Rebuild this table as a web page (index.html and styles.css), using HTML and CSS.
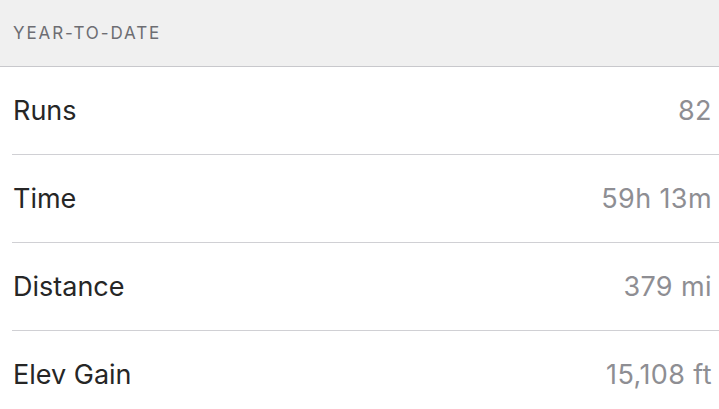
FILE: index.html
```html
<!DOCTYPE html>
<html>
<head>
<meta charset="utf-8">
<link rel="stylesheet" href="styles.css">
</head>
<body>
<div class="header">YEAR-TO-DATE</div>
<ul class="list">
  <li class="row"><span class="label">Runs</span><span class="value">82</span></li>
  <li class="row"><span class="label">Time</span><span class="value">59h 13m</span></li>
  <li class="row"><span class="label">Distance</span><span class="value">379 mi</span></li>
  <li class="row"><span class="label">Elev Gain</span><span class="value">15,108 ft</span></li>
</ul>
</body>
</html>
```
FILE: styles.css
```css
html, body {
  margin: 0;
  padding: 0;
  background: #ffffff;
  font-family: "Inter", "Liberation Sans", Arial, sans-serif;
}
.header {
  height: 67px;
  box-sizing: border-box;
  background: #f0f0f0;
  border-bottom: 1px solid #c8c8cc;
  display: flex;
  align-items: center;
  padding-left: 13px;
  font-size: 17px;
  color: #6d6d72;
  letter-spacing: 1.9px;
}
.list {
  list-style: none;
  margin: 0;
  padding: 0 0 0 12px;
}
.row {
  height: 88px;
  box-sizing: border-box;
  border-bottom: 1px solid #d0d0d4;
  display: flex;
  align-items: center;
  justify-content: space-between;
  padding: 0 7px 0 1px;
  font-size: 27px;
}
.label {
  color: #262626;
}
.value {
  color: #8e8e93;
  letter-spacing: 0.4px;
}
```
